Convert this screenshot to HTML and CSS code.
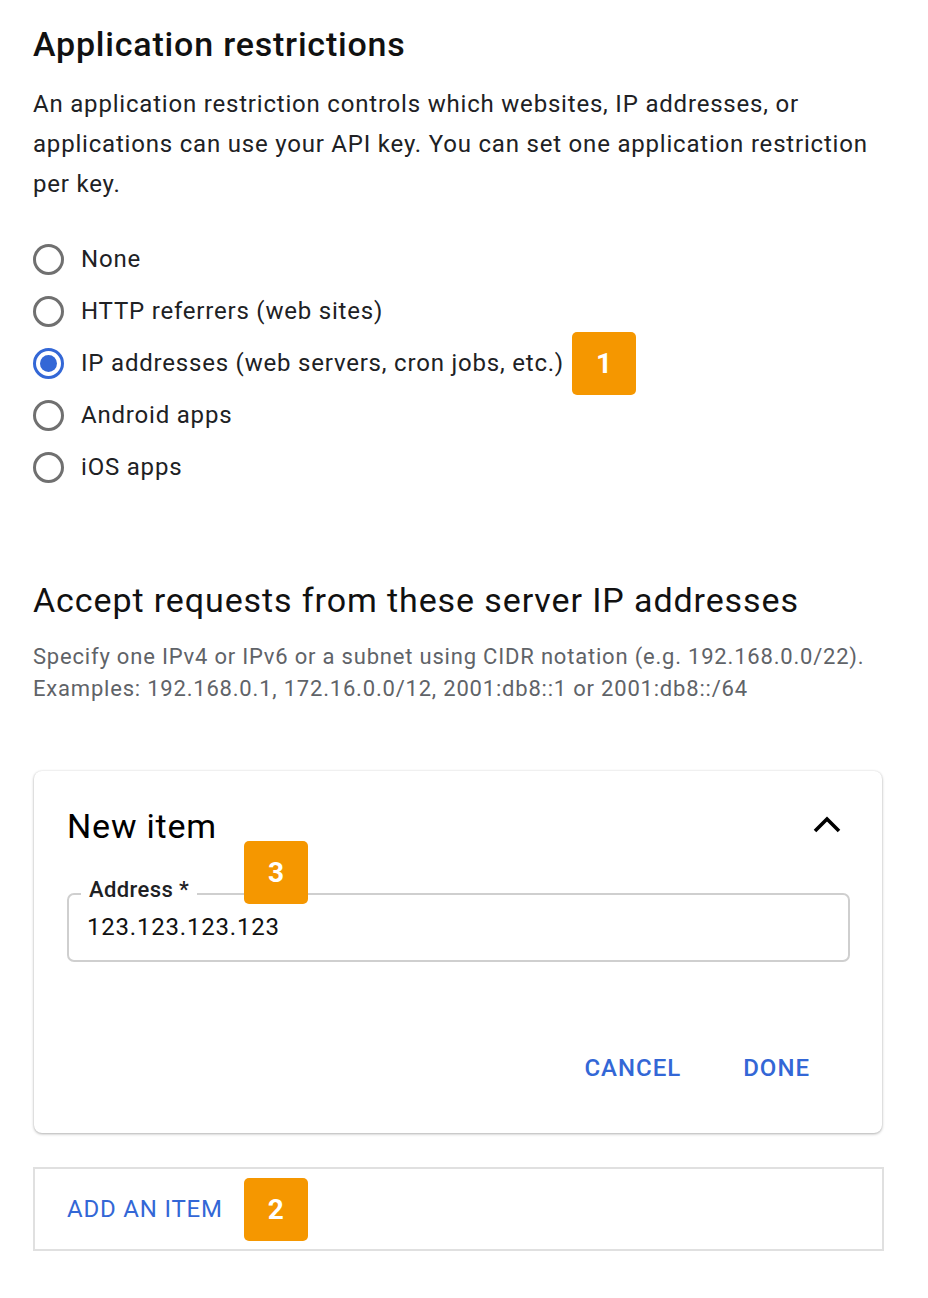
FILE: index.html
```html
<!DOCTYPE html>
<html lang="en">
<head>
<meta charset="utf-8">
<title>Application restrictions</title>
<link rel="stylesheet" href="styles.css">
</head>
<body>
<main class="page">
  <h1 class="title">Application restrictions</h1>
  <p class="intro">An application restriction controls which websites, IP addresses, or applications can use your API key. You can set one application restriction per key.</p>

  <ul class="radios">
    <li class="radio-row"><span class="radio"></span><span class="radio-label">None</span></li>
    <li class="radio-row"><span class="radio"></span><span class="radio-label">HTTP referrers (web sites)</span></li>
    <li class="radio-row"><span class="radio checked"></span><span class="radio-label">IP addresses (web servers, cron jobs, etc.)</span><span class="badge badge-inline">1</span></li>
    <li class="radio-row"><span class="radio"></span><span class="radio-label">Android apps</span></li>
    <li class="radio-row"><span class="radio"></span><span class="radio-label">iOS apps</span></li>
  </ul>

  <h2 class="subtitle">Accept requests from these server IP addresses</h2>
  <p class="help">Specify one IPv4 or IPv6 or a subnet using CIDR notation (e.g. 192.168.0.0/22).<br>Examples: 192.168.0.1, 172.16.0.0/12, 2001:db8::1 or 2001:db8::/64</p>

  <section class="card">
    <div class="card-head">
      <h3 class="card-title">New item</h3>
      <svg class="chevron" width="30" height="20" viewBox="0 0 30 20"><polyline points="3,17 15,5 27,17" fill="none" stroke="#000" stroke-width="3.6"/></svg>
    </div>
    <div class="field">
      <span class="field-label">Address *</span>
      <span class="badge badge-field">3</span>
      <div class="field-value">123.123.123.123</div>
    </div>
    <div class="actions">
      <button class="btn">CANCEL</button>
      <button class="btn">DONE</button>
    </div>
  </section>

  <div class="add-box">
    <button class="btn add-btn">ADD AN ITEM</button>
    <span class="badge">2</span>
  </div>
</main>
</body>
</html>
```

FILE: styles.css
```css
* { box-sizing: border-box; }
html, body { margin: 0; padding: 0; background: #fff; }
body {
  font-family: Roboto, "Liberation Sans", Arial, sans-serif;
  color: #202124;
  width: 928px;
  letter-spacing: 0.8px;
}
.page { padding: 22px 45px 40px 33px; }

.title {
  margin: 0;
  font-size: 34px;
  line-height: 44px;
  font-weight: 500;
  color: #111;
}
.intro {
  margin: 18px 0 0;
  font-size: 24px;
  line-height: 40px;
  color: #202124;
}

.radios { list-style: none; margin: 29px 0 0; padding: 0; }
.radio-row {
  display: flex;
  align-items: center;
  height: 52px;
  font-size: 24px;
  color: #202124;
}
.radio {
  width: 31px; height: 31px;
  border: 3px solid #707070;
  border-radius: 50%;
  flex: none;
  margin-right: 17px;
  position: relative;
}
.radio.checked { border-color: #3367d6; }
.radio.checked::after {
  content: "";
  position: absolute;
  left: 50%; top: 50%;
  width: 17px; height: 17px;
  margin: -8.5px 0 0 -8.5px;
  border-radius: 50%;
  background: #3367d6;
}
.badge {
  display: inline-flex;
  align-items: center;
  justify-content: center;
  width: 64px; height: 63px;
  border-radius: 5px;
  background: #f59700;
  color: #fff;
  font-weight: 700;
  font-size: 28px;
  letter-spacing: 0;
  flex: none;
}
.badge-inline { margin-left: 8px; }

.subtitle {
  margin: 85px 0 0;
  font-size: 34px;
  line-height: 44px;
  font-weight: 400;
  letter-spacing: 0.9px;
  color: #111;
}
.help {
  margin: 19px 0 0;
  font-size: 22px;
  line-height: 32px;
  color: #5f6368;
}

.card {
  margin: 66px 0 0 1px;
  width: 848px;
  border-radius: 8px;
  background: #fff;
  box-shadow: 0 1px 3px rgba(0,0,0,0.3), 0 0 2px rgba(0,0,0,0.08);
  padding: 33px 33px 51px 33px;
}
.card-head {
  display: flex;
  align-items: center;
  justify-content: space-between;
  padding-right: 7px;
}
.card-title {
  margin: 0;
  font-size: 34px;
  line-height: 44px;
  font-weight: 400;
  color: #000;
}
.chevron { display: block; margin-top: -4px; }

.field {
  position: relative;
  margin-top: 45px;
  width: 783px;
  border: 2px solid #cfcfcf;
  border-radius: 7px;
  height: 69px;
  padding: 16px 18px 0;
}
.field-label {
  position: absolute;
  left: 12px;
  top: -20px;
  background: #fff;
  padding: 0 8px;
  font-size: 22px;
  line-height: 30px;
  font-weight: 500;
  letter-spacing: 0.4px;
  color: #202124;
}
.badge-field {
  position: absolute;
  left: 175px;
  top: -54px;
}
.field-value {
  font-size: 24px;
  line-height: 32px;
  color: #111;
}

.actions {
  display: flex;
  justify-content: flex-end;
  gap: 62px;
  margin-top: 92px;
  padding-right: 39px;
}
.btn {
  border: 0;
  background: none;
  padding: 0;
  font-family: inherit;
  font-size: 24px;
  font-weight: 500;
  color: #3367d6;
  letter-spacing: 1px;
  cursor: pointer;
}

.add-box {
  margin-top: 34px;
  width: 851px;
  height: 84px;
  border: 2px solid #e0e0e0;
  display: flex;
  align-items: center;
  gap: 21px;
  padding-left: 32px;
}
.add-btn { font-weight: 400; letter-spacing: 0.8px; }
```
